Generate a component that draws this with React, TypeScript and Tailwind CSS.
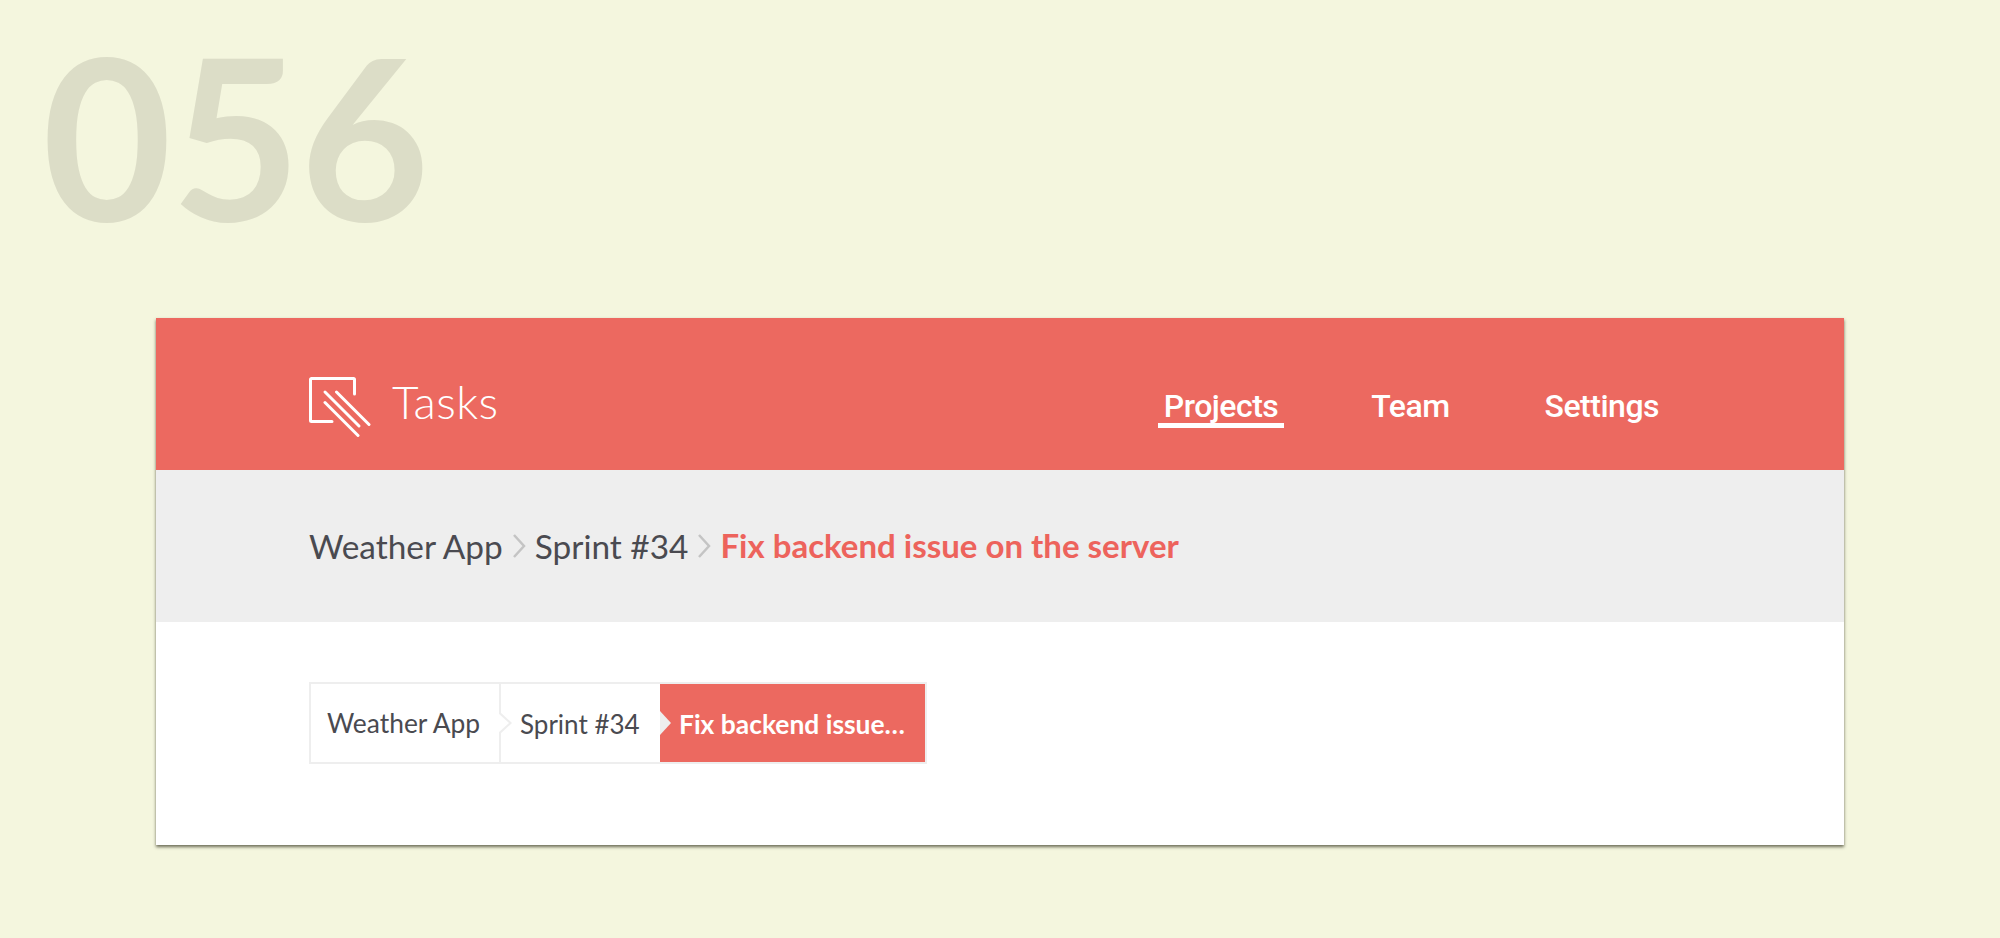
const lato = "font-['Lato',sans-serif]";

const navLinks = [
  { label: "Projects", active: true },
  { label: "Team", active: false },
  { label: "Settings", active: false },
];

function Logo() {
  return (
    <svg width="62" height="60" viewBox="0 0 62 60" fill="none" stroke="white" strokeWidth="3" className="block">
      <path d="M23 44.5H2.5a1 1 0 0 1-1-1V2.5a1 1 0 0 1 1-1h42a1 1 0 0 1 1 1V17" strokeLinecap="round" strokeLinejoin="round" />
      <path d="M16 15L50 49" strokeLinecap="round" />
      <path d="M27.5 15L60 47.5" strokeLinecap="round" />
      <path d="M16 25.5L49 58.5" strokeLinecap="round" />
    </svg>
  );
}

function Chevron() {
  return (
    <svg width="14" height="24" viewBox="0 0 14 24" fill="none" stroke="#c4c4c4" strokeWidth="2.5" className="block">
      <path d="M2 1l10 11L2 23" />
    </svg>
  );
}

export default function App() {
  return (
    <div className={`${lato} h-[938px] overflow-hidden bg-[#f4f6de]`}>
      <div className="h-[318px] pl-[42px]">
        <div className="text-[224px] leading-[270px] font-bold text-[#dcddc7] tracking-[-1px]">056</div>
      </div>

      <div className="mx-[156px] h-[527px] bg-white shadow-[0_2px_3px_rgba(50,50,30,0.7)]">
        <header className="flex h-[152px] items-start justify-between bg-[#ec6960] pl-[153px] pr-[185px] pt-[56px]">
          <div className="flex items-start gap-[21px]">
            <div className="mt-[3px]">
              <Logo />
            </div>
            <span className="text-[46px] leading-[56px] font-light tracking-[0.4px] text-white">Tasks</span>
          </div>
          <nav className="mt-[15px] flex items-start gap-[95px] font-['Roboto',sans-serif] text-[32px] font-medium tracking-[-0.5px] text-white">
            {navLinks.map(({ label, active }) => (
              <a key={label} className={active ? "-mr-[8px] border-b-[5px] border-white px-[6px] leading-[34px]" : "leading-[34px]"}>
                {label}
              </a>
            ))}
          </nav>
        </header>

        <div className="flex h-[152px] items-center gap-[9px] bg-[#eeeeee] pl-[153px] text-[33.4px] text-[#4a4a50]">
          <span>Weather App</span>
          <Chevron />
          <span>Sprint #34</span>
          <Chevron />
          <span className="text-[33px] font-bold text-[#ed635c]">Fix backend issue on the server</span>
        </div>

        <div className="pl-[153px] pt-[60px]">
          <div className="flex h-[82px] w-[618px] border-2 border-[#eeeeee] text-[26.4px] text-[#4a4a50]">
            <div className="relative flex w-[190px] items-center border-r-2 border-[#eeeeee] pl-[16px] pt-[2px]">
              Weather App
              <span className="absolute right-[-13px] top-[27px] h-[24px] w-[13px] bg-[#eeeeee] [clip-path:polygon(0_0,100%_50%,0_100%)]" />
              <span className="absolute right-[-10px] top-[29px] h-[20px] w-[11px] bg-white [clip-path:polygon(0_0,100%_50%,0_100%)]" />
            </div>
            <div className="relative flex w-[159px] items-center pl-[19px] pt-[2px] text-[26px]">Sprint #34</div>
            <div className="relative flex flex-1 items-center bg-[#ec6960] pl-[19px] pt-[4px] font-bold text-white">
              <span className="absolute left-0 top-[27px] h-[24px] w-[11px] bg-[#eeeeee] [clip-path:polygon(0_0,100%_50%,0_100%)]" />
              Fix backend issue
              <span className="tracking-[1px]">…</span>
            </div>
          </div>
        </div>
      </div>
    </div>
  );
}
